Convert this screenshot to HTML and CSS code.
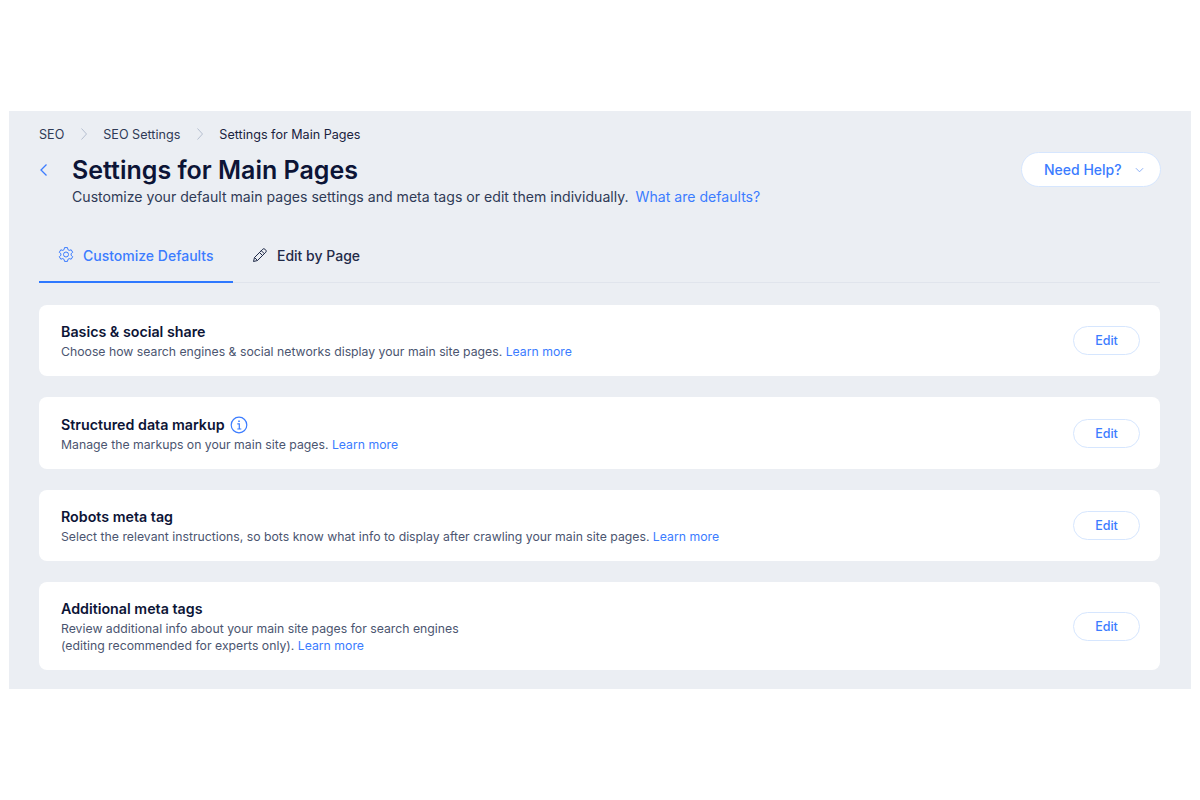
FILE: index.html
```html
<!DOCTYPE html>
<html lang="en">
<head>
<meta charset="utf-8">
<title>Settings for Main Pages</title>
<link rel="stylesheet" href="styles.css">
</head>
<body>
<main class="panel">
  <nav class="crumbs">
    <span>SEO</span>
    <svg class="crumb-sep" viewBox="0 0 8 14"><path d="M1.5 1.5 6.5 7l-5 5.5"/></svg>
    <span>SEO Settings</span>
    <svg class="crumb-sep" viewBox="0 0 8 14"><path d="M1.5 1.5 6.5 7l-5 5.5"/></svg>
    <span class="crumb-current">Settings for Main Pages</span>
  </nav>
  <header class="head">
    <svg class="back" viewBox="0 0 9 14"><path d="M7.5 1.5 2 7l5.500 5.500"/></svg>
    <div class="head-text">
      <h1>Settings for Main Pages</h1>
      <p>Customize your default main pages settings and meta tags or edit them individually. <a class="defaults">What are defaults?</a></p>
    </div>
    <button class="help">Need Help?<svg class="help-caret" viewBox="0 0 10 6"><path d="M1 1l4 4 4-4"/></svg></button>
  </header>
  <div class="tabs">
    <div class="tab tab-active">
      <svg class="tab-icon" viewBox="0 0 16 16"><path d="M6.500.6h3l.4 2 1.300.8 2-.6 1.500 2.500-1.600 1.400v1.600l1.600 1.400-1.500 2.500-2-.6-1.300.8-.4 2h-3l-.4-2-1.300-.8-2 .6L1.300 9.700l1.600-1.400V6.700L1.300 5.300l1.500-2.500 2 .6 1.300-.8z"/><circle cx="8" cy="7.500" r="2.500"/></svg>
      Customize Defaults
    </div>
    <div class="tab">
      <svg class="tab-icon" viewBox="0 0 16 16"><path d="M1.500 14.500l1-4L10.800 2.200a1.500 1.500 0 0 1 2.100 0l.9.900a1.500 1.500 0 0 1 0 2.100L5.500 13.500z"/><path d="M9.300 3.700l3 3M7.500 5.500l3 3M2.500 10.500l3 3"/></svg>
      Edit by Page
    </div>
  </div>
  <section class="cards">
    <article class="card">
      <div>
        <h2>Basics &amp; social share</h2>
        <p>Choose how search engines &amp; social networks display your main site pages. <a>Learn more</a></p>
      </div>
      <button class="edit">Edit</button>
    </article>
    <article class="card">
      <div>
        <h2>Structured data markup<svg class="info" viewBox="0 0 18 18"><circle cx="9" cy="9" r="7.800"/><path d="M7.300 7.800H9.300V13M7.300 13h4"/><path class="dot" d="M8.200 4.500h1.600v1.600H8.200z"/></svg></h2>
        <p>Manage the markups on your main site pages. <a>Learn more</a></p>
      </div>
      <button class="edit">Edit</button>
    </article>
    <article class="card">
      <div>
        <h2>Robots meta tag</h2>
        <p>Select the relevant instructions, so bots know what info to display after crawling your main site pages. <a>Learn more</a></p>
      </div>
      <button class="edit">Edit</button>
    </article>
    <article class="card card-tall">
      <div>
        <h2>Additional meta tags</h2>
        <p>Review additional info about your main site pages for search engines<br>(editing recommended for experts only). <a>Learn more</a></p>
      </div>
      <button class="edit">Edit</button>
    </article>
  </section>
</main>
</body>
</html>
```
FILE: styles.css
```css
* { box-sizing: border-box; }
html, body { margin: 0; background: #fff; }
body {
  padding: 111px 9px 0;
  font-family: Inter, "Liberation Sans", sans-serif;
  color: #162d3d;
}
a { color: #3b7cff; }
h1, h2, p { margin: 0; }

.panel {
  height: 578px;
  background: #ebeef3;
  padding: 14px 31px 0 30px;
}

.crumbs {
  display: flex;
  align-items: center;
  height: 18px;
  font-size: 12.600px;
  color: #2f3a56;
}
.crumb-sep {
  width: 8px;
  height: 14px;
  margin: 0 15px 0 16px;
  fill: none;
  stroke: #b6bfd0;
  stroke-width: 1;
}
.crumb-current { color: #1a2340; }

.head {
  display: flex;
  align-items: flex-start;
  margin-top: 10px;
}
.back {
  width: 9px;
  height: 14px;
  margin-top: 10px;
  margin-right: 24px;
  fill: none;
  stroke: #3b7cff;
  stroke-width: 1.300;
}
.head-text { flex: 1; }
h1 {
  font-size: 25px;
  line-height: 34px;
  font-weight: 600;
  color: #0c1436;
}
.head-text p {
  font-size: 14.100px;
  line-height: 20px;
  color: #2f3a56;
}
.defaults { margin-left: 3px; }
.help {
  display: flex;
  align-items: center;
  flex: none;
  width: 140px;
  height: 35px;
  margin-top: -1px;
  margin-right: -1px;
  padding: 0 0 0 22px;
  background: #fff;
  border: 1px solid #d6e6fe;
  border-radius: 18px;
  font: 500 14px Inter, "Liberation Sans", sans-serif;
  color: #3b7cff;
}
.help-caret {
  width: 9px;
  height: 6px;
  margin-left: 13px;
  fill: none;
  stroke: #7ea6f5;
  stroke-width: 1;
}

.tabs {
  display: flex;
  height: 58px;
  margin-top: 18px;
  border-bottom: 1px solid #e0e4ec;
}
.tab {
  display: flex;
  align-items: center;
  gap: 9px;
  height: 58px;
  padding: 4px 19px 0;
  font-size: 14px;
  font-weight: 500;
  color: #1f2a48;
  border-bottom: 2px solid transparent;
}
.tab-active {
  width: 194px;
  color: #3b7cff;
  border-bottom-color: #2e78ff;
}
.tab-icon {
  width: 16px;
  height: 16px;
  fill: none;
  stroke: currentColor;
  stroke-width: 1;
}

.cards {
  display: flex;
  flex-direction: column;
  gap: 21.200px;
  margin-top: 22px;
}
.card {
  display: flex;
  align-items: center;
  justify-content: space-between;
  height: 71.300px;
  padding: 2px 20px 0 22px;
  background: #fff;
  border-radius: 8px;
}
.card-tall { height: 87.500px; }
.card h2 {
  display: flex;
  align-items: center;
  margin-bottom: 2px;
  font-size: 14.250px;
  line-height: 18px;
  font-weight: 600;
  color: #0c1436;
}
.card p {
  font-size: 12.250px;
  line-height: 17px;
  color: #4b5570;
}
.info {
  width: 18px;
  height: 18px;
  margin-left: 5px;
  fill: none;
  stroke: #3b7cff;
  stroke-width: 1.200;
}
.info .dot { fill: #3b7cff; stroke: none; }
.edit {
  width: 67px;
  height: 29px;
  margin-top: -2px;
  background: #fff;
  border: 1px solid #d6e6fe;
  border-radius: 15px;
  font: 500 12.500px Inter, "Liberation Sans", sans-serif;
  color: #3b7cff;
}
```
